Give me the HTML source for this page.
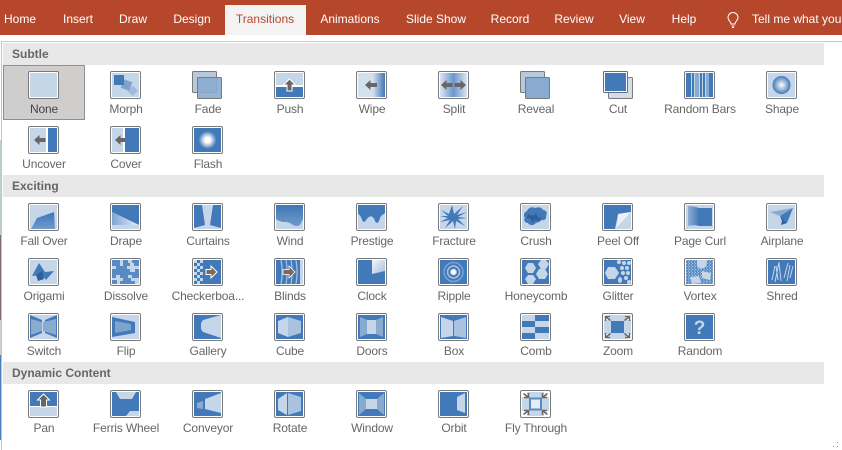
<!DOCTYPE html>
<html><head><meta charset="utf-8"><style>
html,body{margin:0;padding:0;background:#fff}
body{width:842px;height:450px;position:relative;overflow:hidden;font-family:"Liberation Sans",sans-serif}
.bar{position:absolute;left:0;top:0;width:842px;height:35px;background:#b7472a}
.tab{position:absolute;top:12px;color:#fff;font-size:12px;line-height:15px;white-space:nowrap;transform:translateX(-50%)}
.act{position:absolute;left:225px;top:5px;width:81px;height:30px;background:#f3f3f3}
.sec{position:absolute;left:3px;width:821px;background:#e8e8e8;color:#666;font-weight:bold;font-size:12px;box-sizing:border-box;padding-left:9px}
.t{position:absolute;width:82px;text-align:center;color:#666;font-size:12px;line-height:15px;white-space:nowrap;letter-spacing:-.15px}
.t svg{display:block;margin:0 0 3px 25px;overflow:visible}
.t span{display:block;width:82px}
.o{fill:#fff;stroke:#7a7a7a}
.l{fill:#c6d6e9}.b{fill:#4279b9}.m{fill:#8aabd0}.g{fill:#666}.w{fill:#fff}.d{fill:#2f5f9c}
</style></head><body>
<svg width="0" height="0" style="position:absolute"><defs>
<linearGradient id="wp" x1="0" x2="1" y1="0" y2="0"><stop offset="0" stop-color="#d5e0ee"/><stop offset=".55" stop-color="#d5e0ee"/><stop offset="1" stop-color="#3f76b6"/></linearGradient>
<linearGradient id="sp" x1="0" x2="1" y1="0" y2="0"><stop offset="0" stop-color="#dbe5f1"/><stop offset=".5" stop-color="#6b98ca"/><stop offset="1" stop-color="#dbe5f1"/></linearGradient>
<radialGradient id="sh"><stop offset="0" stop-color="#fff"/><stop offset="1" stop-color="#4279b9"/></radialGradient>
<radialGradient id="fl"><stop offset="0" stop-color="#fff"/><stop offset=".3" stop-color="#fff"/><stop offset="1" stop-color="#4279b9"/></radialGradient>
<linearGradient id="v" x1="0" x2="0" y1="0" y2="1"><stop offset="0" stop-color="#3f76b6"/><stop offset="1" stop-color="#6f9bcc"/></linearGradient>
<linearGradient id="dr" x1="0" x2="1" y1="0" y2="0"><stop offset="0" stop-color="#7ea5d0"/><stop offset="1" stop-color="#e8eff7"/></linearGradient>
<linearGradient id="pc" x1="0" x2="1" y1="0" y2="0"><stop offset="0" stop-color="#8fb0d5"/><stop offset="1" stop-color="#4279b9"/></linearGradient>
<linearGradient id="pl" x1="0" x2="1" y1="0" y2="1"><stop offset="0" stop-color="#f2f5fa"/><stop offset="1" stop-color="#a9bfd9"/></linearGradient>
<pattern id="sk" width="3" height="3" patternUnits="userSpaceOnUse"><rect width="3" height="3" fill="#5c8dc5"/><rect width="1" height="1" fill="#b4cae3"/><rect x="2" y="1.500" width="1" height="1" fill="#b4cae3"/></pattern>
</defs></svg>

<div class="bar"></div><div class="act"></div>
<div class="tab" style="left:20px">Home</div>
<div class="tab" style="left:78px">Insert</div>
<div class="tab" style="left:133px">Draw</div>
<div class="tab" style="left:192px">Design</div>
<div class="tab" style="left:265px;color:#b7472a">Transitions</div>
<div class="tab" style="left:350px">Animations</div>
<div class="tab" style="left:436px">Slide Show</div>
<div class="tab" style="left:510px">Record</div>
<div class="tab" style="left:574px">Review</div>
<div class="tab" style="left:632px">View</div>
<div class="tab" style="left:684px">Help</div>
<svg style="position:absolute;left:726px;top:12px" width="14" height="17" viewBox="0 0 14 17"><path d="M5 12c0-2.500-3-3.500-3-6.500a5 5 0 0 1 10 0c0 3-3 4-3 6.500zM5.500 14h3M6 15.500h2" fill="none" stroke="#fff"/></svg>
<div class="tab" style="left:752px;transform:none">Tell me what you</div>

<div style="position:absolute;left:1px;top:41px;width:841px;height:1px;background:#c9c9c9"></div>
<div style="position:absolute;left:1px;top:41px;width:1px;height:409px;background:#c4c4c4"></div>
<div style="position:absolute;left:0;top:140px;width:1px;height:95px;background:#bcd0cc"></div>
<div style="position:absolute;left:0;top:235px;width:1px;height:85px;background:#7d6f6b"></div>
<div style="position:absolute;left:0;top:320px;width:1px;height:35px;background:#cfcfcf"></div>
<div style="position:absolute;left:0;top:355px;width:1px;height:85px;background:#4a7fc0"></div>

<div class="sec" style="top:43px;height:22px;line-height:22px">Subtle</div>
<div class="sec" style="top:175px;height:22px;line-height:22px">Exciting</div>
<div class="sec" style="top:362px;height:22px;line-height:22px">Dynamic Content</div>
<div style="position:absolute;left:3px;top:65px;width:80px;height:53px;background:#cfcecd;border:1px solid #8f8f8f"></div>

<!-- Subtle -->
<div class="t" style="left:3px;top:71px;color:#444"><svg width="31" height="28"><rect class="o" x=".5" y=".5" width="30" height="27" rx="1.500"/><svg x="2" y="2" width="27" height="24"><rect class="l" width="27" height="24"/></svg></svg><span>None</span></div>
<div class="t" style="left:85px;top:71px"><svg width="31" height="28"><rect class="o" x=".5" y=".5" width="30" height="27" rx="1.500"/><svg x="2" y="2" width="27" height="24"><rect class="l" width="27" height="24"/><rect x="17" y="14" width="7.500" height="7.500" fill="#a1bcdb" transform="rotate(45 20.700 17.700)"/><rect x="10" y="7.500" width="9" height="9" fill="#7fa3cc" transform="rotate(20 14.500 12)"/><rect class="b" x="2" y="2" width="10" height="10"/></svg></svg><span>Morph</span></div>
<div class="t" style="left:167px;top:71px"><svg width="31" height="28"><rect x=".5" y=".5" width="24" height="21" fill="#b9c9dc" stroke="#7a7a7a" rx="1"/><rect x="5.500" y="6.500" width="24" height="21" fill="#8aabd0" fill-opacity=".9" stroke="#7a7a7a" rx="1"/></svg><span>Fade</span></div>
<div class="t" style="left:249px;top:71px"><svg width="31" height="28"><rect class="o" x=".5" y=".5" width="30" height="27" rx="1.500"/><svg x="2" y="2" width="27" height="24"><rect class="l" width="27" height="12"/><rect class="w" y="12" width="27" height="2"/><rect class="b" y="14" width="27" height="10"/><path class="g" d="M13.500 6l6 6h-3.500v6h-5v-6h-3.500z" stroke="#fff"/></svg></svg><span>Push</span></div>
<div class="t" style="left:331px;top:71px"><svg width="31" height="28"><rect class="o" x=".5" y=".5" width="30" height="27" rx="1.500"/><svg x="2" y="2" width="27" height="24"><rect width="27" height="24" fill="url(#wp)"/><path class="g" d="M7 12l5.500-5v3h6.500v4h-6.500v3z"/></svg></svg><span>Wipe</span></div>
<div class="t" style="left:413px;top:71px"><svg width="31" height="28"><rect class="o" x=".5" y=".5" width="30" height="27" rx="1.500"/><svg x="2" y="2" width="27" height="24"><rect width="27" height="24" fill="url(#sp)"/><path class="g" d="M1 12l5.500-5v3h6v4h-6v3zM26 12l-5.500-5v3h-6v4h6v3z"/></svg></svg><span>Split</span></div>
<div class="t" style="left:495px;top:71px"><svg width="31" height="28"><rect x=".5" y=".5" width="24" height="21" fill="#b9c9dc" stroke="#7a7a7a" rx="1"/><rect x="5.500" y="6.500" width="24" height="21" fill="#8aabd0" stroke="#7a7a7a" rx="1"/></svg><span>Reveal</span></div>
<div class="t" style="left:577px;top:71px"><svg width="31" height="28" style="margin-left:26px"><rect x="5.500" y="6.500" width="24" height="21" fill="#d3dde9" stroke="#7a7a7a" rx="1"/><rect x="1" y="1" width="23" height="20" fill="#4279b9" stroke="#fff" stroke-width="2"/><rect x=".5" y=".5" width="24" height="21" fill="none" stroke="#5f6f80" rx="1"/></svg><span>Cut</span></div>
<div class="t" style="left:659px;top:71px"><svg width="31" height="28"><rect class="o" x=".5" y=".5" width="30" height="27" rx="1.500"/><svg x="2" y="2" width="27" height="24"><rect class="b" width="27" height="24"/><path d="M5.500 0v24M8.500 0v24M13.500 0v24M16.500 0v24M19.500 0v24" stroke="#c6d6e9" fill="none"/><rect class="m" x="9" width="4" height="24"/><rect class="m" x="20" width="3" height="24"/></svg></svg><span>Random Bars</span></div>
<div class="t" style="left:741px;top:71px"><svg width="31" height="28"><rect class="o" x=".5" y=".5" width="30" height="27" rx="1.500"/><svg x="2" y="2" width="27" height="24"><rect class="l" width="27" height="24"/><circle cx="13.500" cy="12" r="9" fill="url(#sh)"/></svg></svg><span>Shape</span></div>

<div class="t" style="left:3px;top:126px"><svg width="31" height="28"><rect class="o" x=".5" y=".5" width="30" height="27" rx="1.500"/><svg x="2" y="2" width="27" height="24"><rect class="l" width="16" height="24"/><rect class="w" x="16" width="2" height="24"/><rect class="b" x="18" width="9" height="24"/><path class="g" d="M4 12l5.500-5v3h6v4h-6v3z"/></svg></svg><span>Uncover</span></div>
<div class="t" style="left:85px;top:126px"><svg width="31" height="28"><rect class="o" x=".5" y=".5" width="30" height="27" rx="1.500"/><svg x="2" y="2" width="27" height="24"><rect class="l" width="11" height="24"/><rect class="w" x="11" width="2" height="24"/><rect class="b" x="13" width="14" height="24"/><path class="g" d="M3 12l5.500-5v3h4.500v4h-4.500v3z"/></svg></svg><span>Cover</span></div>
<div class="t" style="left:167px;top:126px"><svg width="31" height="28"><rect class="o" x=".5" y=".5" width="30" height="27" rx="1.500"/><svg x="2" y="2" width="27" height="24"><rect class="b" width="27" height="24"/><circle cx="13.500" cy="12" r="9" fill="url(#fl)"/></svg></svg><span>Flash</span></div>

<!-- Exciting row 1 -->
<div class="t" style="left:3px;top:203px"><svg width="31" height="28"><rect class="o" x=".5" y=".5" width="30" height="27" rx="1.500"/><svg x="2" y="2" width="27" height="24"><rect class="l" width="27" height="24"/><path d="M1 24L7 13 24 7l1 17z" fill="url(#v)"/></svg></svg><span>Fall Over</span></div>
<div class="t" style="left:85px;top:203px"><svg width="31" height="28"><rect class="o" x=".5" y=".5" width="30" height="27" rx="1.500"/><svg x="2" y="2" width="27" height="24"><rect class="l" width="27" height="24"/><path class="b" d="M0 0h27v20L0 7z"/><path d="M0 7l27 13H0z" fill="url(#dr)"/></svg></svg><span>Drape</span></div>
<div class="t" style="left:167px;top:203px"><svg width="31" height="28"><rect class="o" x=".5" y=".5" width="30" height="27" rx="1.500"/><svg x="2" y="2" width="27" height="24"><rect class="l" width="27" height="24"/><path class="b" d="M0 0h8l3 20-11 3zM27 0h-8l-3 20 11 3z"/></svg></svg><span>Curtains</span></div>
<div class="t" style="left:249px;top:203px"><svg width="31" height="28"><rect class="o" x=".5" y=".5" width="30" height="27" rx="1.500"/><svg x="2" y="2" width="27" height="24"><rect class="l" width="27" height="24"/><path fill="url(#v)" d="M0 0h27v14c-2 3-2 7-6 7-5 0-6-4-12-4-4 0-6-1-9-3z"/></svg></svg><span>Wind</span></div>
<div class="t" style="left:331px;top:203px"><svg width="31" height="28"><rect class="o" x=".5" y=".5" width="30" height="27" rx="1.500"/><svg x="2" y="2" width="27" height="24"><rect class="l" width="27" height="24"/><path class="b" d="M0 0h27v8c-2 2-4 2-5 5-1 4-3 7-5 3-1-3-3-6-6-4-2 1-3 4-5 5-2 0-2-6-6-8z"/></svg></svg><span>Prestige</span></div>
<div class="t" style="left:413px;top:203px"><svg width="31" height="28"><rect class="o" x=".5" y=".5" width="30" height="27" rx="1.500"/><svg x="2" y="2" width="27" height="24"><rect class="l" width="27" height="24"/><path class="b" d="M12 0l2 9 9-8-6 9 10-3-9 5 9 1-9 1 7 7-9-5-1 8-2-8-8 7 5-8-10 2 8-4-8-2 8 0-7-6 8 4z"/></svg></svg><span>Fracture</span></div>
<div class="t" style="left:495px;top:203px"><svg width="31" height="28"><rect class="o" x=".5" y=".5" width="30" height="27" rx="1.500"/><svg x="2" y="2" width="27" height="24"><rect class="l" width="27" height="24"/><path class="b" d="M5 6c1-3 5-5 8-3 3-1 7-1 8 2 3 0 5 3 3 6 1 3-2 5-5 4-1 3-5 2-6 4-3 2-6 1-7-1-3 0-5-3-3-5-2-2-1-6 2-7z"/><path class="d" d="M6 9l5 2 3-3 2 5 4-1-3 4-4-1-3 3-1-4-4-1z"/></svg></svg><span>Crush</span></div>
<div class="t" style="left:577px;top:203px"><svg width="31" height="28"><rect class="o" x=".5" y=".5" width="30" height="27" rx="1.500"/><svg x="2" y="2" width="27" height="24"><rect class="b" width="27" height="24"/><path class="l" d="M14 9L27 7v17H11z"/><path fill="#eef2f8" d="M14 9l13-2L11 24c3-5 3-10 3-15z"/></svg></svg><span>Peel Off</span></div>
<div class="t" style="left:659px;top:203px"><svg width="31" height="28"><rect class="o" x=".5" y=".5" width="30" height="27" rx="1.500"/><svg x="2" y="2" width="27" height="24"><rect class="l" width="27" height="24"/><rect class="b" x="13" y="3" width="13" height="18"/><path fill="url(#pc)" d="M2 21V1c4 0 8 1 11 2v18c-3-1-7-1-11 0z"/></svg></svg><span>Page Curl</span></div>
<div class="t" style="left:741px;top:203px"><svg width="31" height="28"><rect class="o" x=".5" y=".5" width="30" height="27" rx="1.500"/><svg x="2" y="2" width="27" height="24"><rect class="l" width="27" height="24"/><path class="m" d="M2 7l23-4-13 8z"/><path class="b" d="M25 3l-6 15-7-7z"/><path class="d" d="M12 11l7 7-6 2 1-4z"/></svg></svg><span>Airplane</span></div>

<!-- Exciting row 2 -->
<div class="t" style="left:3px;top:258px"><svg width="31" height="28"><rect class="o" x=".5" y=".5" width="30" height="27" rx="1.500"/><svg x="2" y="2" width="27" height="24"><rect class="l" width="27" height="24"/><path class="b" d="M9 3l6 9 9-1-8 9-4-5-10 1z"/><path class="d" d="M6 15l6-4 2 8-6 2z"/></svg></svg><span>Origami</span></div>
<div class="t" style="left:85px;top:258px"><svg width="31" height="28"><rect class="o" x=".5" y=".5" width="30" height="27" rx="1.500"/><svg x="2" y="2" width="27" height="24"><rect class="l" width="27" height="24"/><path fill="#5a8ac3" d="M0 0h8v3h3V0h5v3h4V0h7v6h-5V3h-4v3h-3v3h3v3h5V9h4v9h-7v-3h-4v3h3v3h4v3H8v-3h3v-3H8v-3H4v3H0V9h4V6H0zM8 6h3V3H8zM0 20h5v4H0z"/></svg></svg><span>Dissolve</span></div>
<div class="t" style="left:167px;top:258px"><svg width="31" height="28"><rect class="o" x=".5" y=".5" width="30" height="27" rx="1.500"/><svg x="2" y="2" width="27" height="24"><rect class="b" width="27" height="24"/><path class="l" d="M0 0h3v3H0zM6 0h3v3H6zM3 3h3v3H3zM0 6h3v3H0zM6 6h3v3H6zM3 9h3v3H3zM0 12h3v3H0zM6 12h3v3H6zM3 15h3v3H3zM0 18h3v3H0zM6 18h3v3H6zM3 21h3v3H3z"/><path d="M12 9.500h5V6l6 6-6 6v-3.500h-5z" fill="#7b6a55" stroke="#fff"/></svg></svg><span>Checkerboa...</span></div>
<div class="t" style="left:249px;top:258px"><svg width="31" height="28"><rect class="o" x=".5" y=".5" width="30" height="27" rx="1.500"/><svg x="2" y="2" width="27" height="24"><rect class="b" width="27" height="24"/><rect class="l" x="24" width="3" height="24"/><path d="M5 0c1.500 8 1.500 16 0 24M10 0c1.500 8 1.500 16 0 24M15 0c1.500 8 1.500 16 0 24M20 0c1.500 8 1.500 16 0 24" stroke="#a9c2e0" fill="none" stroke-width="1.200"/><path d="M7 9.500h6V6l6 6-6 6v-3.500H7z" fill="#7b6a55" stroke="#fff" stroke-width=".8"/></svg></svg><span>Blinds</span></div>
<div class="t" style="left:331px;top:258px"><svg width="31" height="28"><rect class="o" x=".5" y=".5" width="30" height="27" rx="1.500"/><svg x="2" y="2" width="27" height="24"><rect class="b" width="27" height="24"/><path d="M14 0h13v11L14 14z" fill="url(#pl)"/></svg></svg><span>Clock</span></div>
<div class="t" style="left:413px;top:258px"><svg width="31" height="28"><rect class="o" x=".5" y=".5" width="30" height="27" rx="1.500"/><svg x="2" y="2" width="27" height="24"><rect class="b" width="27" height="24"/><circle cx="13.500" cy="12" r="9.500" fill="none" stroke="#7da3cf" stroke-width="1.500"/><circle cx="13.500" cy="12" r="6" fill="none" stroke="#a9c2e0" stroke-width="1.500"/><circle cx="13.500" cy="12" r="2.800" fill="#fff" stroke="#c6d6e9"/></svg></svg><span>Ripple</span></div>
<div class="t" style="left:495px;top:258px"><svg width="31" height="28"><rect class="o" x=".5" y=".5" width="30" height="27" rx="1.500"/><svg x="2" y="2" width="27" height="24"><rect class="b" width="27" height="24"/><path class="l" d="M6 3h5l3 5-3 5H6L3 8zM19 0h5l3 4-3 5h-5l-3-5zM17 9h6l3 5-3 5h-6l-3-5zM6 15h5l3 4-3 5H6l-3-5z"/></svg></svg><span>Honeycomb</span></div>
<div class="t" style="left:577px;top:258px"><svg width="31" height="28"><rect class="o" x=".5" y=".5" width="30" height="27" rx="1.500"/><svg x="2" y="2" width="27" height="24"><rect class="b" width="27" height="24"/><path class="l" d="M4 7h7l4 6-4 6H4l-3-6z"/><g class="l"><circle cx="15" cy="2" r="2"/><circle cx="20" cy="3" r="2"/><circle cx="25" cy="3" r="2"/><circle cx="18" cy="8" r="2"/><circle cx="23" cy="8" r="2"/><circle cx="19" cy="13" r="2"/><circle cx="24" cy="13" r="2"/><circle cx="22" cy="18" r="2"/><ellipse cx="16" cy="20" rx="2" ry="3"/><circle cx="25" cy="22" r="2"/></g></svg></svg><span>Glitter</span></div>
<div class="t" style="left:659px;top:258px"><svg width="31" height="28"><rect class="o" x=".5" y=".5" width="30" height="27" rx="1.500"/><svg x="2" y="2" width="27" height="24"><rect width="27" height="24" fill="url(#sk)"/><path class="l" d="M11 0h10l-1 7-6 2-3-3zM16 11l9 2-1 7-8-2zM4 17l9-1 2 7-9 1z"/></svg></svg><span>Vortex</span></div>
<div class="t" style="left:741px;top:258px"><svg width="31" height="28"><rect class="o" x=".5" y=".5" width="30" height="27" rx="1.500"/><svg x="2" y="2" width="27" height="24"><rect class="b" width="27" height="24"/><path d="M4 20l3-14M7 22l4-20M10 20L8 6M13 21L11 3M16 18l4-15M19 21l3-16M22 18l3-12" stroke="#c6d6e9" fill="none"/></svg></svg><span>Shred</span></div>

<!-- Exciting row 3 -->
<div class="t" style="left:3px;top:313px"><svg width="31" height="28"><rect class="o" x=".5" y=".5" width="30" height="27" rx="1.500"/><svg x="2" y="2" width="27" height="24"><rect class="l" width="27" height="24"/><path class="b" d="M0 0l12 5v13L0 23zM27 0l-12 5v13l12 5z"/><path class="m" d="M1 4l11 3v9L1 20zM26 4L13 7v9l13 4z"/></svg></svg><span>Switch</span></div>
<div class="t" style="left:85px;top:313px"><svg width="31" height="28"><rect class="o" x=".5" y=".5" width="30" height="27" rx="1.500"/><svg x="2" y="2" width="27" height="24"><rect class="l" width="27" height="24"/><path class="b" d="M0 2l23 5v11L0 22z"/><path fill="#7da3cf" d="M3 6l16 3v6L3 18z"/></svg></svg><span>Flip</span></div>
<div class="t" style="left:167px;top:313px"><svg width="31" height="28"><rect class="o" x=".5" y=".5" width="30" height="27" rx="1.500"/><svg x="2" y="2" width="27" height="24"><rect class="b" width="27" height="24"/><path class="l" d="M27 0v23L9 17l-2-3V8l2-3z"/></svg></svg><span>Gallery</span></div>
<div class="t" style="left:249px;top:313px"><svg width="31" height="28"><rect class="o" x=".5" y=".5" width="30" height="27" rx="1.500"/><svg x="2" y="2" width="27" height="24"><rect class="b" width="27" height="24"/><path class="l" d="M2 6l10-4v20L2 18z"/><path fill="#a9c2e0" d="M12 2l13 4v12l-13 4z"/></svg></svg><span>Cube</span></div>
<div class="t" style="left:331px;top:313px"><svg width="31" height="28"><rect class="o" x=".5" y=".5" width="30" height="27" rx="1.500"/><svg x="2" y="2" width="27" height="24"><rect class="b" width="27" height="24"/><path class="m" d="M2 2l7 3v14l-7 3zM25 2l-7 3v14l7 3z"/><rect class="l" x="9" y="5" width="9" height="14"/></svg></svg><span>Doors</span></div>
<div class="t" style="left:413px;top:313px"><svg width="31" height="28"><rect class="o" x=".5" y=".5" width="30" height="27" rx="1.500"/><svg x="2" y="2" width="27" height="24"><rect class="b" width="27" height="24"/><path class="l" d="M1 2l12 4v15L1 23z"/><path fill="#a9c2e0" d="M26 2L14 6v15l12 2z"/></svg></svg><span>Box</span></div>
<div class="t" style="left:495px;top:313px"><svg width="31" height="28"><rect class="o" x=".5" y=".5" width="30" height="27" rx="1.500"/><svg x="2" y="2" width="27" height="24"><rect class="l" width="27" height="24"/><path class="b" d="M13 0h14v6H13zM0 6h13v6H0zM13 12h14v6H13zM0 18h13v6H0z"/></svg></svg><span>Comb</span></div>
<div class="t" style="left:577px;top:313px"><svg width="31" height="28"><rect class="o" x=".5" y=".5" width="30" height="27" rx="1.500"/><svg x="2" y="2" width="27" height="24"><rect class="l" x="5" y="0" width="17" height="24"/><rect class="l" x="0" y="5" width="27" height="14"/><rect class="b" x="7" y="6" width="13" height="12"/><path d="M1.500 1.500l5 4M25.500 1.500l-5 4M1.500 22.500l5-4M25.500 22.500l-5-4M1.500 6V1.500H6M25.500 6V1.500H21M1.500 18v4.500H6M25.500 18v4.500H21" stroke="#666" fill="none" stroke-width="1.500"/></svg></svg><span>Zoom</span></div>
<div class="t" style="left:659px;top:313px"><svg width="31" height="28"><rect class="o" x=".5" y=".5" width="30" height="27" rx="1.500"/><svg x="2" y="2" width="27" height="24"><rect class="b" width="27" height="24"/><text x="13.500" y="19" text-anchor="middle" font-family="Liberation Sans" font-weight="bold" font-size="19" letter-spacing="0" fill="#c6d6e9">?</text></svg></svg><span>Random</span></div>

<!-- Dynamic -->
<div class="t" style="left:3px;top:390px"><svg width="31" height="28"><rect class="o" x=".5" y=".5" width="30" height="27" rx="1.500"/><svg x="2" y="2" width="27" height="24"><rect class="b" width="27" height="14"/><rect class="w" y="14" width="27" height="1"/><rect class="l" y="15" width="27" height="9"/><path class="g" d="M13.500 2l6 6h-3v7h-6V8h-3z" stroke="#fff"/></svg></svg><span>Pan</span></div>
<div class="t" style="left:85px;top:390px"><svg width="31" height="28"><rect class="o" x=".5" y=".5" width="30" height="27" rx="1.500"/><svg x="2" y="2" width="27" height="24"><rect class="b" width="27" height="24"/><path class="l" d="M4 0h20l-4 7H8zM14 24l4-5h9v5z"/></svg></svg><span>Ferris Wheel</span></div>
<div class="t" style="left:167px;top:390px"><svg width="31" height="28"><rect class="o" x=".5" y=".5" width="30" height="27" rx="1.500"/><svg x="2" y="2" width="27" height="24"><rect class="b" width="27" height="24"/><path class="l" d="M11 7l16-6v20l-16-4z"/><path class="m" d="M3 11l6-2v8l-6-1z"/></svg></svg><span>Conveyor</span></div>
<div class="t" style="left:249px;top:390px"><svg width="31" height="28"><rect class="o" x=".5" y=".5" width="30" height="27" rx="1.500"/><svg x="2" y="2" width="27" height="24"><rect class="b" width="27" height="24"/><path class="l" d="M2 7l9-6v22l-9-5z"/><path fill="#a9c2e0" d="M12 1l13 4v14l-13 4z"/></svg></svg><span>Rotate</span></div>
<div class="t" style="left:331px;top:390px"><svg width="31" height="28"><rect class="o" x=".5" y=".5" width="30" height="27" rx="1.500"/><svg x="2" y="2" width="27" height="24"><rect class="b" width="27" height="24"/><path class="m" d="M1 1l7 6v10l-7 6zM26 1l-7 6v10l7 6z"/><rect class="l" x="8" y="7" width="11" height="10"/></svg></svg><span>Window</span></div>
<div class="t" style="left:413px;top:390px"><svg width="31" height="28"><rect class="o" x=".5" y=".5" width="30" height="27" rx="1.500"/><svg x="2" y="2" width="27" height="24"><rect class="b" width="27" height="24"/><path class="l" d="M17 5l8-4v20l-8-3z"/></svg></svg><span>Orbit</span></div>
<div class="t" style="left:495px;top:390px"><svg width="31" height="28"><rect class="o" x=".5" y=".5" width="30" height="27" rx="1.500"/><svg x="2" y="2" width="27" height="24"><rect class="l" x="5" width="17" height="24"/><rect class="l" y="5" width="27" height="14"/><rect x="8" y="6.500" width="11" height="11" fill="#e4ecf5" stroke="#5a8ac3" stroke-width="2"/><path d="M6.500 5.500l-5-4M20.500 5.500l5-4M6.500 18.500l-5 4M20.500 18.500l5 4M6.500 1v4.500H2M20.500 1v4.500H25M6.500 23v-4.500H2M20.500 23v-4.500H25" stroke="#666" fill="none" stroke-width="1.500"/></svg></svg><span>Fly Through</span></div>

<svg style="position:absolute;left:832px;top:441px" width="8" height="8"><rect x="5" y="1" width="1" height="1" fill="#999"/><rect x="1" y="5" width="1" height="1" fill="#999"/><rect x="5" y="5" width="1" height="1" fill="#999"/></svg>
</body></html>
